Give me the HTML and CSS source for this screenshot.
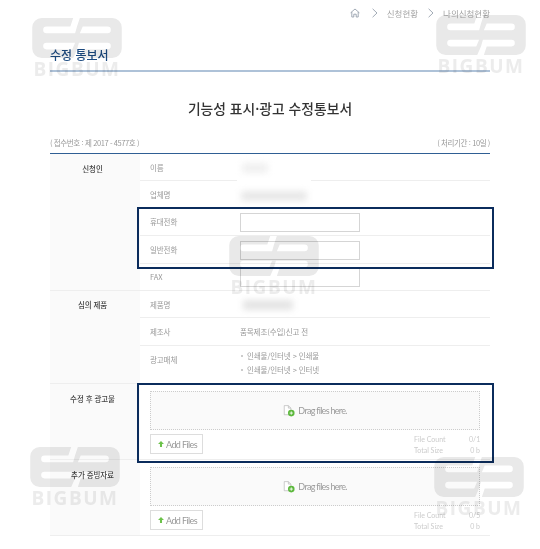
FILE: index.html
```html
<!DOCTYPE html>
<html lang="ko">
<head>
    <meta charset="UTF-8">
    <meta name="viewport" content="width=device-width, initial-scale=1.0">
    <title>수정 통보서</title>
    <link rel="stylesheet" href="styles.css">
</head>
<body>
    <div class="page">
        <div class="crumbs">
            <svg class="home" width="10" height="10" viewBox="0 0 10 10"><path d="M.6 4.8 5 1l4.400 3.800M1.800 4v5h2V6.200h2.400V9h2V4"/></svg>
            <svg class="chev" width="6" height="10" viewBox="0 0 6 10"><path d="M.6.8 5 5 .6 9.200"/></svg>
            <span>신청현황</span>
            <svg class="chev" width="6" height="10" viewBox="0 0 6 10"><path d="M.6.8 5 5 .6 9.200"/></svg>
            <span>나의신청현황</span>
        </div>
        <h2 class="page-title">수정 통보서</h2>
        <h1 class="doc-title">기능성 표시·광고 수정통보서</h1>
        <div class="meta">
            <span>( 접수번호 : 제 2017 - 4577호 )</span>
            <span>( 처리기간 : 10일 )</span>
        </div>

        <table class="form">
            <tr>
                <th rowspan="5">신청인</th>
                <td class="label">이름</td>
                <td class="value"><span class="masked mask-name"></span><span class="cut"></span></td>
            </tr>
            <tr>
                <td class="label">업체명</td>
                <td class="value"><span class="masked mask-company"></span></td>
            </tr>
            <tr>
                <td class="label">휴대전화</td>
                <td class="value"><input class="field" type="text"></td>
            </tr>
            <tr>
                <td class="label">일반전화</td>
                <td class="value"><input class="field" type="text"></td>
            </tr>
            <tr>
                <td class="label">FAX</td>
                <td class="value"><input class="field" type="text"></td>
            </tr>
            <tr>
                <th rowspan="3">심의 제품</th>
                <td class="label">제품명</td>
                <td class="value"><span class="masked mask-product"></span></td>
            </tr>
            <tr>
                <td class="label">제조사</td>
                <td class="value">품목제조(수입)신고 전</td>
            </tr>
            <tr class="tall">
                <td class="label">광고매체</td>
                <td class="value">
                    <ul class="media">
                        <li>인쇄물/인터넷 &gt; 인쇄물</li>
                        <li>인쇄물/인터넷 &gt; 인터넷</li>
                    </ul>
                </td>
            </tr>
            <tr class="upload-row">
                <th>수정 후 광고물</th>
                <td colspan="2">
                    <div class="drop">
                        <svg width="12" height="12" viewBox="0 0 14.500 14"><path class="sheet" d="M1.500.5h5l3 3v8h-8zM6.500.5v3h3"/><circle class="plus-bg" cx="10" cy="9.500" r="4"/><path class="plus" d="M8 9.500h4M10 7.500v4"/></svg>
                        <span>Drag files here.</span>
                    </div>
                    <div class="upload-foot">
                        <button class="add" type="button"><svg width="6" height="6" viewBox="0 0 7 7"><path d="M3.500 0 7 3.600H4.700V7H2.300V3.600H0z"/></svg>Add Files</button>
                        <dl class="stats">
                            <dt>File Count</dt><dd>0/1</dd>
                            <dt>Total Size</dt><dd>0 b</dd>
                        </dl>
                    </div>
                </td>
            </tr>
            <tr class="upload-row">
                <th>추가 증빙자료</th>
                <td colspan="2">
                    <div class="drop">
                        <svg width="12" height="12" viewBox="0 0 14.500 14"><path class="sheet" d="M1.500.5h5l3 3v8h-8zM6.500.5v3h3"/><circle class="plus-bg" cx="10" cy="9.500" r="4"/><path class="plus" d="M8 9.500h4M10 7.500v4"/></svg>
                        <span>Drag files here.</span>
                    </div>
                    <div class="upload-foot">
                        <button class="add" type="button"><svg width="6" height="6" viewBox="0 0 7 7"><path d="M3.500 0 7 3.600H4.700V7H2.300V3.600H0z"/></svg>Add Files</button>
                        <dl class="stats">
                            <dt>File Count</dt><dd>0/5</dd>
                            <dt>Total Size</dt><dd>0 b</dd>
                        </dl>
                    </div>
                </td>
            </tr>
        </table>
    </div>

    <!-- 강조 박스 -->
    <div class="highlight hl-phone"></div>
    <div class="highlight hl-upload"></div>

    <!-- 워터마크 -->
    <svg width="0" height="0" class="defs"><defs>
        <path id="logo" fill-rule="evenodd" d="M10 0H43L40 9H15a3.500 3.500 0 0 0 0 7H45L47 9 50 0H84a10 10 0 0 1 10 10V32a10 10 0 0 1-10 10H50L53 33H79a3.500 3.500 0 0 0 0-7H49L47 33 43 42H10A10 10 0 0 1 0 32V10A10 10 0 0 1 10 0ZM15 26a3.500 3.500 0 0 0 0 7H42L45 26ZM53 9 50 16H79a3.500 3.500 0 0 0 0-7Z"/>
    </defs></svg>
    <div class="mark mark-1"><svg viewBox="0 0 94 42"><use href="#logo"/></svg><span>BIGBUM</span></div>
    <div class="mark mark-2"><svg viewBox="0 0 94 42"><use href="#logo"/></svg><span>BIGBUM</span></div>
    <div class="mark mark-3"><svg viewBox="0 0 94 42"><use href="#logo"/></svg><span>BIGBUM</span></div>
    <div class="mark mark-4"><svg viewBox="0 0 94 42"><use href="#logo"/></svg><span>BIGBUM</span></div>
    <div class="mark mark-5"><svg viewBox="0 0 94 42"><use href="#logo"/></svg><span>BIGBUM</span></div>
</body>
</html>
```

FILE: styles.css
```css
html, body {
    margin: 0;
    padding: 0;
    background: #fff;
    overflow: hidden;
}
body {
    position: relative;
    width: 540px;
    height: 549px;
    font-family: "Noto Sans CJK KR", "Noto Sans", sans-serif;
    color: #999;
}
.page {
    box-sizing: border-box;
    width: 540px;
    height: 549px;
    padding: 0 50px;
    filter: blur(0.35px);
}

/* 상단 경로 */
.crumbs {
    display: flex;
    justify-content: flex-end;
    align-items: center;
    gap: 9px;
    height: 26px;
    font-size: 8.500px;
    color: #a5a5a5;
}
.crumbs svg {
    fill: none;
    stroke: #8a96a3;
    stroke-width: 0.8;
}
.crumbs .chev {
    margin-left: 1px;
}
.crumbs .home {
    margin-right: 2px;
}

.page-title {
    box-sizing: border-box;
    height: 46px;
    margin: 0;
    padding-top: 20px;
    border-bottom: 2px solid #aec2d8;
    font-size: 12px;
    font-weight: 500;
    line-height: 18px;
    color: #1c4a80;
}
.doc-title {
    margin: 26px 0 0;
    font-size: 13.800px;
    font-weight: 500;
    line-height: 20px;
    text-align: center;
    color: #333;
}
.meta {
    display: flex;
    justify-content: space-between;
    height: 14px;
    margin-top: 18px;
    font-size: 7.500px;
    letter-spacing: -0.4px;
    line-height: 14px;
    color: #999;
}

/* 신청서 표 */
.form {
    width: 440px;
    margin-top: 3px;
    border-collapse: collapse;
    table-layout: fixed;
    border-top: 1px solid #2f5f94;
    font-size: 7.500px;
    letter-spacing: -0.1px;
}
.form tr {
    height: 27.400px;
    border-bottom: 1px solid #eee;
}
.form th {
    width: 90px;
    padding: 8.500px 5px 0 0;
    box-sizing: border-box;
    background: #fafafa;
    vertical-align: top;
    font-size: 7.500px;
    font-weight: 500;
    line-height: 12px;
    color: #444;
}
.form td {
    padding: 0;
    vertical-align: middle;
    line-height: 12px;
    color: #999;
}
.form .label {
    width: 100px;
    padding-left: 10px;
    padding-top: 1px;
    box-sizing: border-box;
}
.form .value {
    position: relative;
}
.form .tall {
    height: 38.700px;
}
.form .tall .label {
    padding-top: 0;
    padding-bottom: 10px;
}
.field {
    display: block;
    box-sizing: border-box;
    width: 120px;
    height: 19px;
    margin-top: 2px;
    padding: 0;
    border: 1px solid #d5d5d5;
    background: #fff;
}
.media {
    margin: 0 0 4px;
    padding: 0;
    list-style: none;
}
.media li {
    position: relative;
    height: 14px;
    padding-left: 7px;
    line-height: 14px;
}
.media li::before {
    content: "";
    position: absolute;
    left: 1px;
    top: 6px;
    width: 2px;
    height: 2px;
    border-radius: 50%;
    background: #bbb;
}

/* 개인정보 가림 */
.masked {
    display: block;
    height: 10px;
    border-radius: 2px;
    filter: blur(3px);
}
.mask-name {
    width: 26px;
    margin: 2px 0 0 2px;
    background: #f0f0f0;
}
.mask-company {
    width: 66px;
    margin: 2px 0 0 1px;
    background: #e8e8e8;
}
.mask-product {
    width: 50px;
    margin: 2px 0 0 3px;
    background: #e4e4e4;
}
.cut {
    position: absolute;
    left: -3px;
    bottom: -2px;
    width: 74px;
    height: 4px;
    background: #fff;
}

/* 파일 첨부 */
.form .upload-row {
    height: 76px;
}
.form .upload-row th {
    height: 76px;
}
.form .upload-row td {
    padding: 7px 10px 0;
    vertical-align: top;
}
.drop {
    display: flex;
    justify-content: center;
    align-items: center;
    gap: 3px;
    box-sizing: border-box;
    height: 39px;
    border: 1px dotted #ccc;
    background: #fafafa;
    font-family: Lato, sans-serif;
    font-size: 9px;
    letter-spacing: -0.7px;
    color: #9a9a9a;
}
.sheet {
    fill: #fff;
    stroke: #b5b5b5;
    stroke-width: 0.8;
}
.plus-bg {
    fill: #5cb83c;
}
.plus {
    fill: none;
    stroke: #fff;
    stroke-width: 1;
}
.upload-foot {
    display: flex;
    justify-content: space-between;
    height: 22px;
    margin-top: 4px;
}
.add {
    display: flex;
    align-items: center;
    gap: 2px;
    box-sizing: border-box;
    width: 53px;
    height: 20px;
    padding: 0 0 0 7px;
    border: 1px solid #ddd;
    background: #fff;
    font-family: Lato, sans-serif;
    font-size: 9px;
    letter-spacing: -0.6px;
    white-space: nowrap;
    color: #999;
}
.add svg {
    fill: #6cc24a;
}
.stats {
    display: grid;
    grid-template-columns: 55px 11px;
    grid-auto-rows: 11px;
    margin: 0;
    font-family: Lato, sans-serif;
    font-size: 7px;
    letter-spacing: 0;
    line-height: 11px;
    color: #ccc;
}
.stats dd {
    margin: 0;
    text-align: right;
    white-space: nowrap;
}

/* 강조 박스 */
.highlight {
    position: absolute;
    left: 137px;
    width: 357px;
    box-sizing: border-box;
    border: 2px solid #0b2c5c;
}
.hl-phone {
    top: 207px;
    height: 62px;
}
.hl-upload {
    top: 383px;
    height: 80px;
}

/* 워터마크 */
.defs {
    position: absolute;
}
.mark {
    position: absolute;
    width: 94px;
    mix-blend-mode: multiply;
    filter: blur(0.4px);
    text-align: center;
    pointer-events: none;
}
.mark svg {
    display: block;
    width: 94px;
    height: 40px;
    fill: #e9e9e9;
}
.mark span {
    display: block;
    margin-top: 1px;
    font-family: "Open Sans", sans-serif;
    font-size: 19px;
    font-weight: 700;
    line-height: 20px;
    letter-spacing: 1.500px;
    color: #ececec;
}
.mark-1 { left: 30px; top: 18px; }
.mark-2 { left: 434px; top: 15px; }
.mark-3 { left: 227px; top: 236px; }
.mark-4 { left: 28px; top: 447px; }
.mark-5 { left: 432px; top: 457px; }
```
